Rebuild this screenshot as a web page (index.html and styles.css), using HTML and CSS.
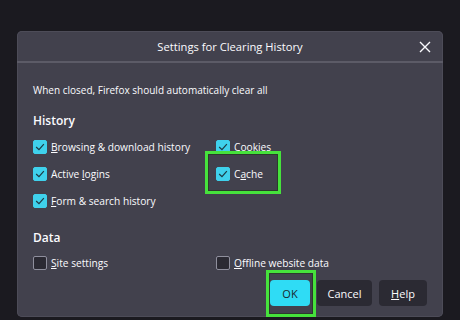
FILE: index.html
```html
<!DOCTYPE html>
<html>
<head>
<meta charset="utf-8">
<link rel="stylesheet" href="styles.css">
</head>
<body>
<div class="dialog">
  <div class="titlebar">
    <span class="title">Settings for Clearing History</span>
    <span class="close">
      <svg width="12" height="12" viewBox="0 0 12 12"><path d="M1 1L11 11M11 1L1 11" stroke="#fbfbfe" stroke-width="1.4" fill="none"/></svg>
    </span>
  </div>
  <div class="content">
    <p class="intro">When closed, Firefox should automatically clear all</p>
    <h3 class="heading">History</h3>
    <div class="grid">
      <label class="item"><span class="box checked"><svg viewBox="0 0 14 14"><path d="M2.5 7L5.8 10.2L11.5 3.6" stroke="#1c3a44" stroke-width="1.4" fill="none"/></svg></span><span><u>B</u>rowsing &amp; download history</span></label>
      <label class="item"><span class="box checked"><svg viewBox="0 0 14 14"><path d="M2.5 7L5.8 10.2L11.5 3.6" stroke="#1c3a44" stroke-width="1.4" fill="none"/></svg></span><span>Cookies</span></label>
      <label class="item"><span class="box checked"><svg viewBox="0 0 14 14"><path d="M2.5 7L5.8 10.2L11.5 3.6" stroke="#1c3a44" stroke-width="1.4" fill="none"/></svg></span><span>Active <u>l</u>ogins</span></label>
      <label class="item"><span class="highlight hl-cache"></span><span class="box checked"><svg viewBox="0 0 14 14"><path d="M2.5 7L5.8 10.2L11.5 3.6" stroke="#1c3a44" stroke-width="1.4" fill="none"/></svg></span><span>C<u>a</u>che</span></label>
      <label class="item"><span class="box checked"><svg viewBox="0 0 14 14"><path d="M2.5 7L5.8 10.2L11.5 3.6" stroke="#1c3a44" stroke-width="1.4" fill="none"/></svg></span><span><u>F</u>orm &amp; search history</span></label>
    </div>
    <h3 class="heading heading-data">Data</h3>
    <div class="grid">
      <label class="item"><span class="box"></span><span><u>S</u>ite settings</span></label>
      <label class="item"><span class="box"></span><span><u>O</u>ffline website data</span></label>
    </div>
    <div class="buttons">
      <span class="btn-wrap"><span class="highlight hl-ok"></span><button class="btn primary">OK</button></span>
      <button class="btn">Cancel</button>
      <button class="btn"><u>H</u>elp</button>
    </div>
  </div>
</div>
</body>
</html>
```
FILE: styles.css
```css
* { box-sizing: border-box; }
html, body { margin: 0; padding: 0; }
body {
  width: 460px;
  height: 320px;
  overflow: hidden;
  background: #1b1a20;
  font-family: "Open Sans", "Noto Sans", sans-serif;
  color: #fbfbfe;
  padding: 31px 0 0 17px;
}
.dialog {
  width: 426px;
  height: 286px;
  background: #42414d;
  border-radius: 5px;
  box-shadow: 0 0 0 1px #4d4c58 inset;
}
.titlebar {
  position: relative;
  height: 32px;
  display: flex;
  align-items: center;
  justify-content: center;
  border-bottom: 2px solid #5c5b67;
}
.title {
  font-size: 11.2px;
  margin-top: 1px;
}
.close {
  position: absolute;
  right: 12px;
  top: 10px;
  width: 12px;
  height: 12px;
  display: flex;
}
.content {
  padding: 0 16px;
}
.intro {
  margin: 19px 0 0;
  font-size: 10px;
  line-height: 16px;
}
.heading {
  margin: 14px 0 0;
  font-size: 12px;
  font-weight: 600;
  line-height: 18px;
}
.heading-data { margin-top: 15px; }
.grid {
  display: grid;
  grid-template-columns: 183px 1fr;
  grid-auto-rows: 27px;
  margin-top: 3px;
}
.heading-data + .grid { margin-top: 2px; }
.item {
  position: relative;
  display: flex;
  align-items: center;
  font-size: 10.2px;
}
.box {
  width: 14px;
  height: 14px;
  margin-right: 4px;
  border-radius: 2px;
  background: #2b2a33;
  border: 1px solid #8f8f9d;
  display: flex;
  flex: none;
}
.box.checked {
  background: #3fd1ec;
  border-color: #3fd1ec;
}
.box svg { width: 12px; height: 12px; }
u { text-underline-offset: 1px; }
.buttons {
  display: flex;
  justify-content: flex-end;
  gap: 7px;
  margin-top: 4px;
}
.btn-wrap { position: relative; display: flex; }
.btn {
  height: 26px;
  padding: 0;
  border: none;
  border-radius: 4px;
  background: #2b2a33;
  color: #fbfbfe;
  font-family: inherit;
  font-size: 11px;
  width: 55px;
}
.btn:last-child { width: 48px; }
.btn.primary {
  width: 40px;
  background: #2fdcf5;
  color: #1a2830;
}
.highlight {
  position: absolute;
  border: 3px solid #46e23c;
  box-shadow: inset 0 0 0 1px #2c3a2c;
  pointer-events: none;
}
.hl-cache {
  left: -11px;
  top: -9px;
  width: 76px;
  height: 43px;
}
.hl-ok {
  left: -4px;
  top: -10px;
  width: 50px;
  height: 47px;
}
```
